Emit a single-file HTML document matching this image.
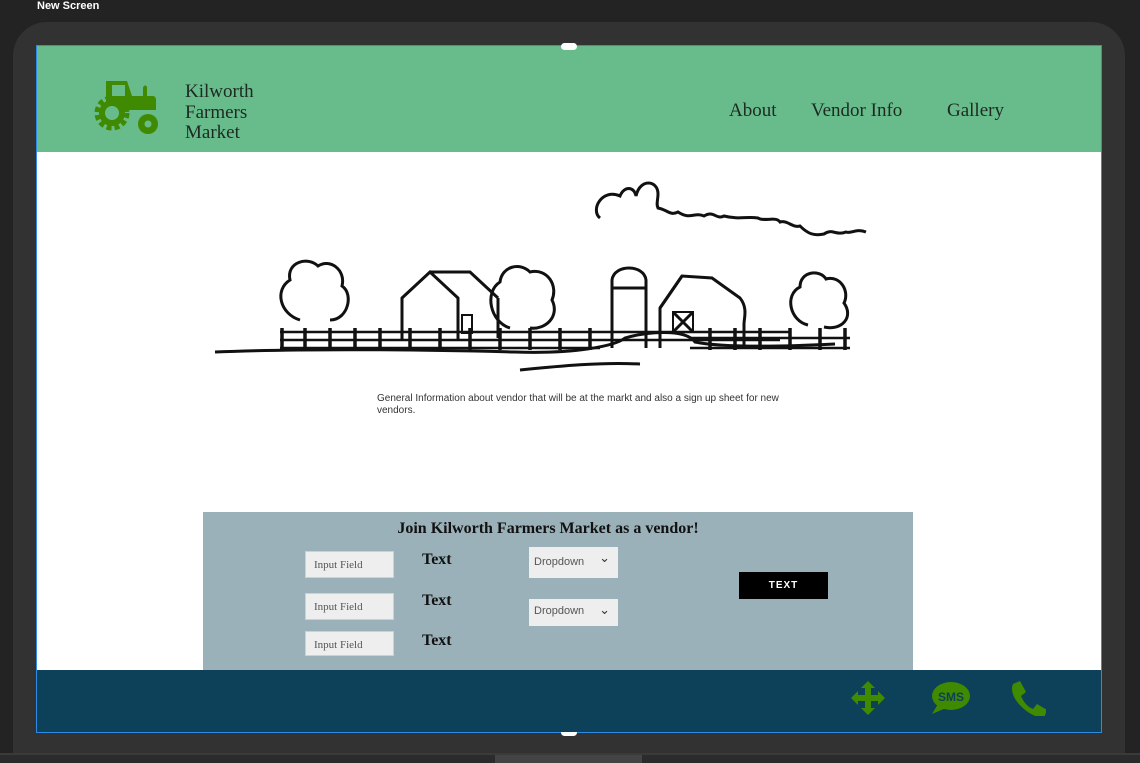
<!DOCTYPE html>
<html><head><meta charset="utf-8"><style>
*{margin:0;padding:0;box-sizing:border-box}
html,body{width:1140px;height:763px;overflow:hidden}
body{background:#232323;position:relative;font-family:"Liberation Serif",serif}
.abs{position:absolute}
.bezel{left:13px;top:22px;width:1112px;height:741px;background:#323232;border-radius:34px 34px 0 0}
.screen{left:36px;top:45px;width:1066px;height:688px;background:#fff;border:1px solid #2d8ae6}
.hdr{left:37px;top:46px;width:1064px;height:106px;background:#68bc8b}
.ftr{left:37px;top:670px;width:1064px;height:62px;background:#0d4159}
.nav{font-size:19px;color:#1c2a22;top:100px}
.form{left:203px;top:512px;width:710px;height:158px;background:#9bb1ba}
.inp{background:#eeeeee;width:89px;height:27px;font-size:11px;color:#555;padding:7px 0 0 8px;border:1px solid #c9d3d7}
.dd{background:#eeeeee;width:89px;height:31px;font-size:11px;color:#555;font-family:"Liberation Sans",sans-serif;padding:9px 0 0 5px}
.dd:after{content:"⌄";position:absolute;right:8px;top:3px;font-size:13px;color:#333}
.txt{font-size:16px;font-weight:bold;color:#111}
</style></head><body>
<div class="abs" style="left:37px;top:0;color:#fff;font:bold 11px 'Liberation Sans',sans-serif">New Screen</div>
<div class="abs bezel"></div>
<div class="abs" style="left:0;top:753px;width:1140px;height:10px;background:#2b2b2b;border-top:2px solid #3a3a3a"></div>
<div class="abs" style="left:495px;top:755px;width:147px;height:8px;background:#444"></div>
<div class="abs screen"></div>
<div class="abs hdr"></div>
<svg class="abs" style="left:93px;top:80px" width="68" height="54" viewBox="0 0 68 54">
<g fill="#3f8a00">
<path d="M13 1h21l5 15h11V8c0-2 3-4 4-1v9h6c2 0 3 2 3 4v10H13z"/>
<circle cx="19" cy="33" r="13"/>
<circle cx="19" cy="33" r="15" fill="none" stroke="#3f8a00" stroke-width="5" stroke-dasharray="5 3"/>
<circle cx="55" cy="44" r="10"/>
</g>
<rect x="19" y="5" width="13" height="11" fill="#68bc8b"/>
<circle cx="19" cy="33" r="7" fill="#68bc8b"/><circle cx="55" cy="44" r="3.5" fill="#68bc8b"/>
</svg>
<div class="abs" style="left:185px;top:82px;font-size:19px;line-height:20.5px;color:#1c2a22">Kilworth<br>Farmers<br>Market</div>
<div class="abs nav" style="left:729px">About</div>
<div class="abs nav" style="left:811px">Vendor Info</div>
<div class="abs nav" style="left:947px">Gallery</div>
<div class="abs" style="left:561px;top:43px;width:16px;height:7px;background:#fff;border-radius:4px"></div>
<div class="abs" style="left:561px;top:729px;width:16px;height:7px;background:#fff;border-radius:4px"></div>
<svg class="abs" style="left:210px;top:160px" width="720" height="220" viewBox="0 0 720 220" fill="none" stroke="#111" stroke-width="3">
<path d="M390 58c-10-8 2-30 20-22 4-10 14-10 16 0 4-18 22-16 22-2 0 6-2 10 0 14 10 2 12 8 20 4 12 8 16 0 26 4 10-6 12 4 20 0 16 4 22 0 34 2 6 4 18-2 22 4 8-2 12 6 20 4 8 8 14 10 24 8 8-6 12 2 22-2 6 2 10-4 20 0"/>
<path d="M90 160c-20-6-26-30-10-40-4-18 18-24 28-14 12-8 28 4 24 20 12 8 6 34-12 34"/>
<path d="M300 168c-20-6-26-36-10-46 2-16 20-20 30-10 18-4 28 14 22 28 8 16-6 30-22 28"/>
<path d="M598 165c-18-4-24-30-8-38 0-16 20-18 26-8 14-4 24 12 18 24 10 14-2 28-20 24"/>
<path d="M192 180v-42l28-26 28 26v42M192 138l28-26h40l28 26M248 138v40M288 138v40"/>
<rect x="252" y="155" width="10" height="18" stroke-width="2"/>
<path d="M402 188v-68c2-16 32-16 34 0v68"/><path d="M402 128h34"/>
<path d="M450 188v-40l22-32 30 2 28 20c8 10 4 20 4 26v24"/><path d="M450 148l22-32"/>
<rect x="463" y="152" width="20" height="20" stroke-width="2"/><path d="M463 152l20 20M483 152l-20 20"/>
<path d="M5 192c100-4 220-2 300 0 60 2 100-6 110-14 20-6 60-10 70 4 20 4 60 6 140 2M310 210c40-4 80-8 120-6"/>
<path d="M70 172h510M70 180h500M70 188h320M480 178h160M480 188h160" stroke-width="2.5"/>
<path d="M72 168v22M95 168v22M120 168v22M145 168v22M170 168v22M200 168v22M230 168v22M260 168v22M290 168v22M320 168v22M350 168v22M380 168v22M500 168v22M525 168v22M550 168v22M580 168v22M610 168v22M635 168v22" stroke-width="3.5"/>
</svg>
<div class="abs" style="left:377px;top:393px;width:410px;font:10px/12px 'Liberation Sans',sans-serif;color:#333">General Information about vendor that will be at the markt and also a sign up sheet for new vendors.</div>
<div class="abs form"></div>
<div class="abs" style="left:203px;top:520px;width:690px;text-align:center;font-size:16px;font-weight:bold;color:#111">Join Kilworth Farmers Market as a vendor!</div>
<div class="abs inp" style="left:305px;top:551px">Input Field</div>
<div class="abs inp" style="left:305px;top:593px">Input Field</div>
<div class="abs inp" style="left:305px;top:631px;height:25px">Input Field</div>
<div class="abs txt" style="left:422px;top:551px">Text</div>
<div class="abs txt" style="left:422px;top:592px">Text</div>
<div class="abs txt" style="left:422px;top:632px">Text</div>
<div class="abs dd" style="left:529px;top:547px">Dropdown</div>
<div class="abs dd" style="left:529px;top:599px;height:27px;padding-top:6px">Dropdown</div>
<div class="abs" style="left:739px;top:572px;width:89px;height:27px;background:#000;color:#fff;font:bold 10px/27px 'Liberation Sans',sans-serif;text-align:center;letter-spacing:1px">TEXT</div>
<div class="abs ftr"></div>
<svg class="abs" style="left:850px;top:680px" width="36" height="36" viewBox="0 0 36 36" fill="#3f8a00">
<path d="M18 1l7 7h-4v7h7v-4l7 7-7 7v-4h-7v7h4l-7 7-7-7h4v-7H8v4l-7-7 7-7v4h7V8h-4z"/></svg>
<svg class="abs" style="left:930px;top:680px" width="42" height="36" viewBox="0 0 42 36">
<ellipse cx="21" cy="16" rx="19" ry="14" fill="#3f8a00"/><path d="M8 24l-6 10 14-6z" fill="#3f8a00"/>
<text x="21" y="21" text-anchor="middle" font-family="Liberation Sans" font-weight="bold" font-size="12" fill="#0d4159">SMS</text></svg>
<svg class="abs" style="left:1010px;top:680px" width="36" height="36" viewBox="0 0 36 36" fill="#3f8a00">
<path d="M3 4l7-3 6 11-5 4c3 7 7 11 12 13l4-5 10 6-3 8C20 38-3 18 3 4z"/></svg>
</body></html>
